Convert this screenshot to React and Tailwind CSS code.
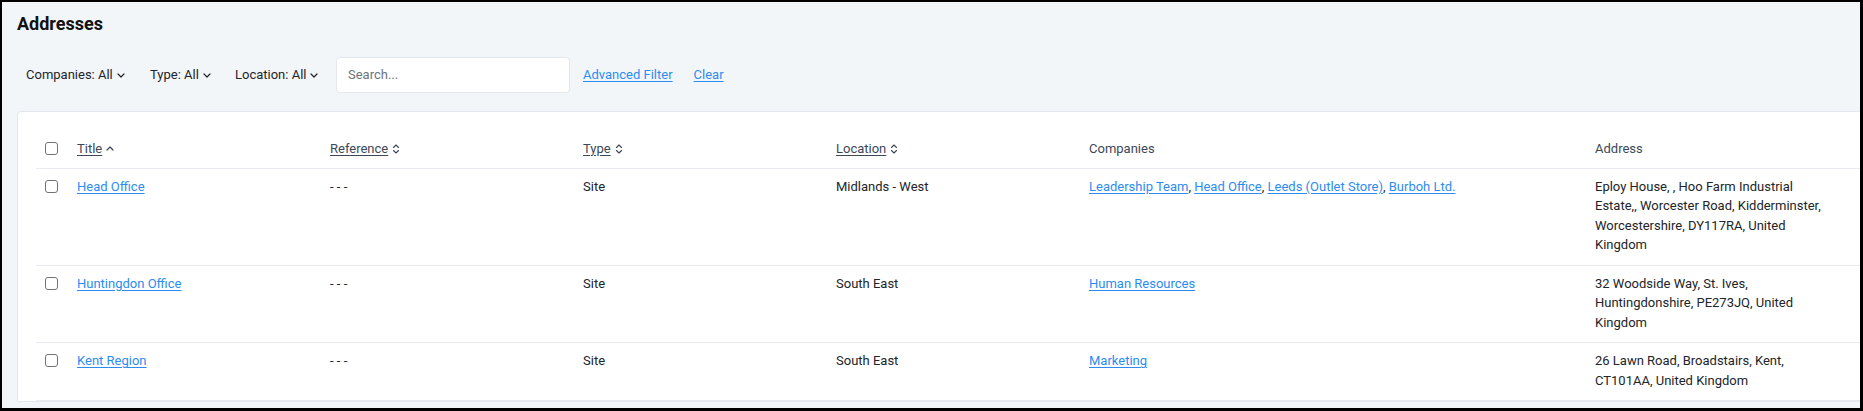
import React from 'react'

const COLS = 'grid grid-cols-[33px_253px_253px_253px_253px_506px_1fr]'

const ROWS = [
  {
    title: 'Head Office',
    type: 'Site',
    location: 'Midlands - West',
    companies: ['Leadership Team', 'Head Office', 'Leeds (Outlet Store)', 'Burboh Ltd.'],
    address: 'Eploy House, , Hoo Farm Industrial Estate,, Worcester Road, Kidderminster, Worcestershire, DY117RA, United Kingdom',
  },
  {
    title: 'Huntingdon Office',
    type: 'Site',
    location: 'South East',
    companies: ['Human Resources'],
    address: '32 Woodside Way, St. Ives, Huntingdonshire, PE273JQ, United Kingdom',
  },
  {
    title: 'Kent Region',
    type: 'Site',
    location: 'South East',
    companies: ['Marketing'],
    address: '26 Lawn Road, Broadstairs, Kent, CT101AA, United Kingdom',
  },
]

function ChevronDown() {
  return (
    <svg width="8" height="5" viewBox="0 0 8 5" className="ml-[4px]">
      <path d="M1 1 L4 4 L7 1" fill="none" stroke="#212529" strokeWidth="1.2" strokeLinecap="round" strokeLinejoin="round" />
    </svg>
  )
}

function ChevronUp() {
  return (
    <svg width="8" height="5" viewBox="0 0 8 5" className="ml-[4px]">
      <path d="M1 4 L4 1 L7 4" fill="none" stroke="#3c4858" strokeWidth="1.2" strokeLinecap="round" strokeLinejoin="round" />
    </svg>
  )
}

function SortIcon() {
  return (
    <svg width="8" height="12" viewBox="0 0 8 12" className="ml-[4px]">
      <path d="M1.5 4.5 L4 2 L6.5 4.5 M1.5 7.5 L4 10 L6.5 7.5" fill="none" stroke="#3c4858" strokeWidth="1.1" strokeLinecap="round" strokeLinejoin="round" />
    </svg>
  )
}

function Checkbox() {
  return <div className="mt-[3px] w-[13px] h-[13px] rounded-[3px] border border-[#6f7378] bg-white" />
}

function Filter({ label, className }) {
  return (
    <button className={`flex items-center h-[36px] text-[13px] text-[#212529] ${className}`}>
      {label}
      <ChevronDown />
    </button>
  )
}

function SortHeader({ label, icon }) {
  return (
    <div className="px-2 pt-[9px] pb-[9px] flex items-center">
      <span className="underline underline-offset-[2px] text-[#3c4858]">{label}</span>
      {icon}
    </div>
  )
}

function Link({ children }) {
  return <a href="#" className="text-[#2d8cf0] underline underline-offset-[2px]">{children}</a>
}

export default function App() {
  return (
    <div className="w-[1863px] h-[411px] overflow-hidden border-black border-t-2 border-l-2 border-r-[3px] border-b-[3px] bg-[#f3f6f9] font-[Roboto,sans-serif] text-[13px] leading-[19.5px] text-[#212529]">
      <h1 className="pl-[15px] pt-[8px] text-[18px] leading-[27px] font-bold text-[#111]">Addresses</h1>

      {/* ── Filters ── */}
      <div className="mt-[20px] flex items-center h-[36px] pl-[24px]">
        <Filter label="Companies: All" className="w-[124px]" />
        <Filter label="Type: All" className="w-[85px]" />
        <Filter label="Location: All" className="w-[101px]" />
        <div className="w-[234px] h-[36px] bg-white border border-[#e4e8ec] rounded-[4px] px-[11px] flex items-center text-[#6c757d]">
          Search...
        </div>
        <a href="#" className="ml-[13px] text-[#2d8cf0] underline underline-offset-[2px]">Advanced Filter</a>
        <a href="#" className="ml-[21px] text-[#2d8cf0] underline underline-offset-[2px]">Clear</a>
      </div>

      {/* ── Table card ── */}
      <div className="mt-[18px] ml-[15px] w-[1880px] bg-white border border-[#e3e8ee] rounded-tl-[4px] pt-[18px] pl-[18px]">
        <div className={`${COLS} border-b border-[#e6e9ed]`}>
          <div className="pl-[9px] pt-[9px]">
            <Checkbox />
          </div>
          <SortHeader label="Title" icon={<ChevronUp />} />
          <SortHeader label="Reference" icon={<SortIcon />} />
          <SortHeader label="Type" icon={<SortIcon />} />
          <SortHeader label="Location" icon={<SortIcon />} />
          <div className="px-2 pt-[9px] pb-[9px] text-[#3c4858]">Companies</div>
          <div className="px-2 pt-[9px] pb-[9px] text-[#3c4858]">Address</div>
        </div>

        {ROWS.map((row) => (
          <div key={row.title} className={`${COLS} border-b border-[#e6e9ed]`}>
            <div className="pl-[9px] pt-2">
              <Checkbox />
            </div>
            <div className="px-2 pt-2 pb-[10px]">
              <Link>{row.title}</Link>
            </div>
            <div className="px-2 pt-2 pb-[10px]">- - -</div>
            <div className="px-2 pt-2 pb-[10px]">{row.type}</div>
            <div className="px-2 pt-2 pb-[10px]">{row.location}</div>
            <div className="px-2 pt-2 pb-[10px]">
              {row.companies.map((c, i) => (
                <React.Fragment key={c}>
                  {i > 0 && ', '}
                  <Link>{c}</Link>
                </React.Fragment>
              ))}
            </div>
            <div className="px-2 pt-2 pb-[10px]">
              <div className="max-w-[238px]">{row.address}</div>
            </div>
          </div>
        ))}
      </div>
    </div>
  )
}
